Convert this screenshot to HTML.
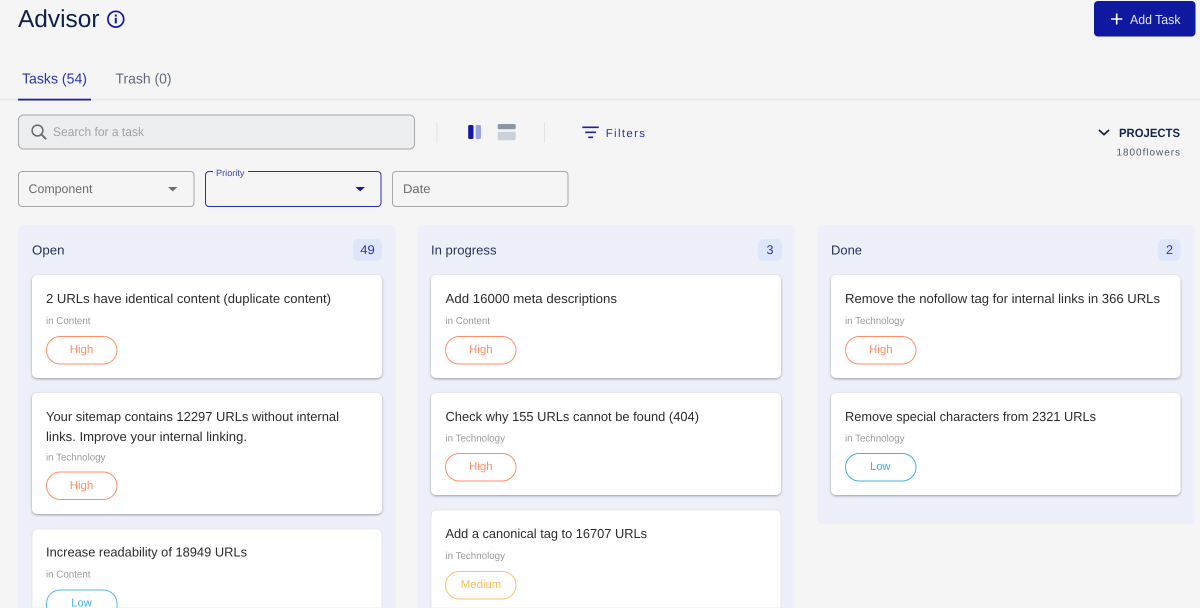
<!DOCTYPE html>
<html><head><meta charset="utf-8"><style>
html,body{margin:0;padding:0;width:1200px;height:608px;overflow:hidden;background:#f5f5f5}
svg{position:absolute;left:0;top:0;display:block}
text{font-family:"Liberation Sans",sans-serif;text-rendering:geometricPrecision}
.t{font-size:13px;fill:#2b2b2e}
.m{font-size:10px;fill:#9a9a9a}
.p{font-size:11.5px}
.h{fill:#ff8f66}.l{fill:#45aee8}.md{fill:#fdbb5c}
.card{fill:#fff;filter:url(#s)}
</style></head><body>
<svg width="1200" height="608" viewBox="0 0 1200 608" xmlns="http://www.w3.org/2000/svg">
<defs><filter id="s" x="-5%" y="-10%" width="110%" height="125%"><feDropShadow dx="0" dy="1" stdDeviation="1.2" flood-color="#3a3f55" flood-opacity=".5"/></filter></defs>
<rect width="1200" height="608" fill="#f5f5f5"/>

<text x="18" y="27" font-size="24.5" fill="#0f1f45" textLength="81.5" lengthAdjust="spacingAndGlyphs">Advisor</text>
<circle cx="115.8" cy="19.2" r="7.9" fill="none" stroke="#1219a0" stroke-width="1.7"/>
<rect x="114.8" y="17.8" width="2" height="5.6" fill="#1219a0"/><rect x="114.8" y="14.6" width="2" height="2" fill="#1219a0"/>

<rect x="1094" y="1" width="101.5" height="35.5" rx="4" fill="#0f19a0"/>
<path d="M1116.7 13.5v11M1111 19h11.3" stroke="#fff" stroke-width="1.6" fill="none"/>
<text x="1130" y="24" font-size="13" fill="#e4e6f7" textLength="50.5" lengthAdjust="spacingAndGlyphs">Add Task</text>

<text x="22" y="83.5" font-size="14.5" fill="#2a34ad" textLength="65" lengthAdjust="spacingAndGlyphs">Tasks (54)</text>
<text x="115.5" y="83.5" font-size="14.5" fill="#5f6b7d" textLength="56" lengthAdjust="spacingAndGlyphs">Trash (0)</text>
<rect x="0" y="99" width="1200" height="1.2" fill="#e7e7e7"/>
<rect x="18" y="98.7" width="73" height="1.8" fill="#1a22a5"/>

<rect x="18.5" y="115" width="396" height="34" rx="5" fill="#edeef0" stroke="#a8a8a8" stroke-width="1"/>
<circle cx="37.5" cy="130.5" r="5.4" fill="none" stroke="#666" stroke-width="1.5"/>
<path d="M41.5 134.5l4.7 4.7" stroke="#666" stroke-width="1.8" fill="none"/>
<text x="53" y="136" font-size="12.5" fill="#a3a3a3" textLength="91" lengthAdjust="spacingAndGlyphs">Search for a task</text>

<rect x="436.5" y="122" width="1" height="21" fill="#e4e4e4"/>
<rect x="544" y="122" width="1" height="21" fill="#e4e4e4"/>
<rect x="468.2" y="125" width="5.3" height="14" rx="1.5" fill="#1219a0"/>
<rect x="475.7" y="125" width="5.3" height="14" rx="1.5" fill="#98a2dc"/>
<rect x="497.7" y="124" width="18" height="5.3" rx="1.5" fill="#8c97a6"/>
<rect x="497.7" y="131.7" width="18" height="8.6" rx="1.5" fill="#cbd1d8"/>
<path d="M582.3 127.3h16.5M585.2 132.3h10.8M588.3 137.3h4.8" stroke="#1a22a5" stroke-width="1.7" fill="none"/>
<text x="605.7" y="136.8" font-size="11.5" fill="#2a34ad" textLength="39.3" lengthAdjust="spacing">Filters</text>

<path d="M1099 130l5 4.6 5-4.6" stroke="#0f1f45" stroke-width="1.7" fill="none"/>
<text x="1119" y="136.8" font-size="12" font-weight="700" fill="#14244a" textLength="61" lengthAdjust="spacingAndGlyphs">PROJECTS</text>
<text x="1116.5" y="155.6" font-size="10" fill="#4d5a70" textLength="63.5" lengthAdjust="spacing">1800flowers</text>

<rect x="18.5" y="171.5" width="175.5" height="35" rx="3.5" fill="#f5f5f5" stroke="#a8a8a8"/>
<text x="28.5" y="193" font-size="12.5" fill="#6c6c6c" textLength="64" lengthAdjust="spacingAndGlyphs">Component</text>
<path d="M168 187h9.4l-4.7 4.4z" fill="#6e6e6e"/>

<rect x="205.5" y="171.5" width="175.5" height="35" rx="3.5" fill="#f5f5f5" stroke="#2530ad"/>
<rect x="213" y="169" width="35" height="5" fill="#f5f5f5"/>
<text x="216" y="176" font-size="9" fill="#3a44b5" textLength="28.5" lengthAdjust="spacingAndGlyphs">Priority</text>
<path d="M355.5 187h9.4l-4.7 4.4z" fill="#1219a0"/>

<rect x="392.5" y="171.5" width="175.5" height="35" rx="3.5" fill="#f5f5f5" stroke="#a8a8a8"/>
<text x="403" y="193" font-size="12.5" fill="#6c6c6c" textLength="27.5" lengthAdjust="spacingAndGlyphs">Date</text>

<!-- Columns -->
<path d="M18 608V231a6 6 0 0 1 6-6H390a6 6 0 0 1 6 6V608z" fill="#edf0f8"/>
<path d="M417 608V231a6 6 0 0 1 6-6H789a6 6 0 0 1 6 6V608z" fill="#edf0f8"/>
<rect x="817" y="225" width="378" height="299" rx="6" fill="#edf0f8"/>

<text x="32" y="254.5" font-size="13" fill="#23325a" textLength="32.5" lengthAdjust="spacingAndGlyphs">Open</text>
<rect x="353" y="239" width="29" height="22" rx="5" fill="#dde6fb"/>
<text x="360.3" y="254" font-size="12.5" fill="#2a34ad" textLength="14.5" lengthAdjust="spacingAndGlyphs">49</text>

<text x="431" y="254.5" font-size="13" fill="#23325a" textLength="65.5" lengthAdjust="spacingAndGlyphs">In progress</text>
<rect x="758" y="239" width="24" height="22" rx="5" fill="#dde6fb"/>
<text x="766.5" y="254" font-size="12.5" fill="#2a34ad" textLength="7" lengthAdjust="spacingAndGlyphs">3</text>

<text x="831" y="254.5" font-size="13" fill="#23325a" textLength="31" lengthAdjust="spacingAndGlyphs">Done</text>
<rect x="1158" y="239" width="22.5" height="22" rx="5" fill="#dde6fb"/>
<text x="1166" y="254" font-size="12.5" fill="#2a34ad" textLength="7" lengthAdjust="spacingAndGlyphs">2</text>

<!-- Column 1 -->
<rect class="card" x="32" y="275" width="350" height="103" rx="5"/>
<text class="t" x="46" y="303" textLength="285" lengthAdjust="spacingAndGlyphs">2 URLs have identical content (duplicate content)</text>
<text class="m" x="46" y="324" textLength="44.5" lengthAdjust="spacingAndGlyphs">in Content</text>
<rect x="46.5" y="336.5" width="70.5" height="27.5" rx="13.7" fill="#fff" stroke="#ff8f66"/>
<text class="p h" x="69.7" y="353" textLength="23.6" lengthAdjust="spacingAndGlyphs">High</text>

<rect class="card" x="32" y="393" width="350" height="121" rx="5"/>
<text class="t" x="46" y="421" textLength="293" lengthAdjust="spacingAndGlyphs">Your sitemap contains 12297 URLs without internal</text>
<text class="t" x="46" y="441" textLength="201" lengthAdjust="spacingAndGlyphs">links. Improve your internal linking.</text>
<text class="m" x="46" y="460.5" textLength="59.5" lengthAdjust="spacingAndGlyphs">in Technology</text>
<rect x="46.5" y="472" width="70.5" height="27.5" rx="13.7" fill="#fff" stroke="#ff8f66"/>
<text class="p h" x="69.7" y="489" textLength="23.6" lengthAdjust="spacingAndGlyphs">High</text>

<path d="M32 608V534a5 5 0 0 1 5-5H377a5 5 0 0 1 5 5V608z" fill="#fff" stroke="#d9dbe6" stroke-width=".6"/>
<text class="t" x="46" y="556.5" textLength="201" lengthAdjust="spacingAndGlyphs">Increase readability of 18949 URLs</text>
<text class="m" x="46" y="577.5" textLength="44.5" lengthAdjust="spacingAndGlyphs">in Content</text>
<path d="M46.5 608V603.7a13.7 13.7 0 0 1 13.7-13.7H103.300a13.7 13.7 0 0 1 13.700 13.700V608" fill="#fff" stroke="#58b7ee"/>
<text class="p l" x="71.3" y="606.500" textLength="20.500" lengthAdjust="spacingAndGlyphs">Low</text>

<!-- Column 2 -->
<rect class="card" x="431" y="275" width="350" height="103" rx="5"/>
<text class="t" x="445.500" y="303" textLength="171.500" lengthAdjust="spacingAndGlyphs">Add 16000 meta descriptions</text>
<text class="m" x="445.500" y="324" textLength="44.500" lengthAdjust="spacingAndGlyphs">in Content</text>
<rect x="445.500" y="336.500" width="70.500" height="27.500" rx="13.700" fill="#fff" stroke="#ff8f66"/>
<text class="p h" x="469" y="353" textLength="23.600" lengthAdjust="spacingAndGlyphs">High</text>

<rect class="card" x="431" y="393" width="350" height="102" rx="5"/>
<text class="t" x="445.500" y="421" textLength="253.500" lengthAdjust="spacingAndGlyphs">Check why 155 URLs cannot be found (404)</text>
<text class="m" x="445.500" y="441.500" textLength="59.500" lengthAdjust="spacingAndGlyphs">in Technology</text>
<rect x="445.500" y="453.500" width="70.500" height="27.500" rx="13.700" fill="#fff" stroke="#ff8f66"/>
<text class="p h" x="469" y="470" textLength="23.600" lengthAdjust="spacingAndGlyphs">High</text>

<path d="M431 608V515a5 5 0 0 1 5-5H776a5 5 0 0 1 5 5V608z" fill="#fff" stroke="#d9dbe6" stroke-width=".6"/>
<text class="t" x="445.500" y="538" textLength="201.500" lengthAdjust="spacingAndGlyphs">Add a canonical tag to 16707 URLs</text>
<text class="m" x="445.500" y="559" textLength="59.500" lengthAdjust="spacingAndGlyphs">in Technology</text>
<rect x="445.500" y="571.500" width="70.500" height="27.500" rx="13.700" fill="#fff" stroke="#fdc26e"/>
<text class="p md" x="460.800" y="588" textLength="40.500" lengthAdjust="spacingAndGlyphs">Medium</text>

<!-- Column 3 -->
<rect class="card" x="831" y="275" width="349.500" height="103" rx="5"/>
<text class="t" x="845" y="303" textLength="315" lengthAdjust="spacingAndGlyphs">Remove the nofollow tag for internal links in 366 URLs</text>
<text class="m" x="845" y="324" textLength="59.500" lengthAdjust="spacingAndGlyphs">in Technology</text>
<rect x="845.500" y="336.500" width="70.500" height="27.500" rx="13.700" fill="#fff" stroke="#ff8f66"/>
<text class="p h" x="869" y="353" textLength="23.600" lengthAdjust="spacingAndGlyphs">High</text>

<rect class="card" x="831" y="393" width="349.500" height="102" rx="5"/>
<text class="t" x="845" y="421" textLength="251" lengthAdjust="spacingAndGlyphs">Remove special characters from 2321 URLs</text>
<text class="m" x="845" y="441.500" textLength="59.500" lengthAdjust="spacingAndGlyphs">in Technology</text>
<rect x="845.500" y="453.500" width="70.500" height="27.500" rx="13.700" fill="#fff" stroke="#45aee8"/>
<text class="p l" x="870" y="470" textLength="20.500" lengthAdjust="spacingAndGlyphs">Low</text>
</svg>
</body></html>
